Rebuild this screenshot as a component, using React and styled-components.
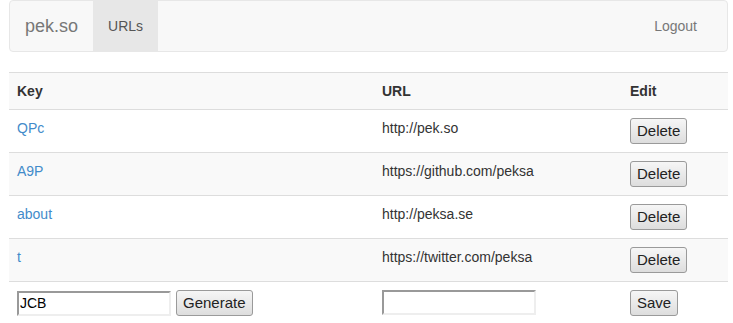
import styled, { createGlobalStyle } from "styled-components";

const GlobalStyle = createGlobalStyle`
  html, body {
    margin: 0;
    padding: 0;
    background: #fff;
  }
  body {
    font-family: "Liberation Sans", Arial, sans-serif;
    font-size: 14px;
    line-height: 20px;
    color: #333;
  }
  * {
    box-sizing: border-box;
  }
`;

const Page = styled.div`
  padding: 0 5px 0 9px;
`;

const Navbar = styled.nav`
  display: flex;
  align-items: stretch;
  min-height: 50px;
  background: #f8f8f8;
  border: 1px solid #e7e7e7;
  border-radius: 4px;
  margin-bottom: 20px;
`;

const Brand = styled.a`
  padding: 15px;
  font-size: 18px;
  line-height: 20px;
  color: #777;
  text-decoration: none;
`;

const NavLink = styled.a`
  padding: 15px;
  line-height: 20px;
  color: ${(p) => (p.$active ? "#555" : "#777")};
  background: ${(p) => (p.$active ? "#e7e7e7" : "transparent")};
  text-decoration: none;
  margin-left: ${(p) => (p.$right ? "auto" : "0")};
  margin-right: ${(p) => (p.$right ? "15px" : "0")};
`;

const Table = styled.table`
  width: 100%;
  border-collapse: collapse;
  border-spacing: 0;
  table-layout: fixed;
`;

const Row = styled.tr`
  background: ${(p) => (p.$striped ? "#f9f9f9" : "#fff")};
`;

const Th = styled.th`
  width: ${(p) => p.$w || "auto"};
  padding: 8px;
  text-align: left;
  font-weight: bold;
  vertical-align: bottom;
  border-top: 1px solid #ddd;
`;

const Td = styled.td`
  padding: 8px;
  vertical-align: top;
  border-top: 1px solid #ddd;
`;

const KeyLink = styled.a`
  color: #428bca;
  text-decoration: none;
`;

const Button = styled.button`
  font-family: inherit;
  font-size: 15px;
  line-height: 20px;
  height: 26px;
  padding: 2px 6px;
  margin: 0;
  color: #222;
  background: linear-gradient(#f6f6f6, #dddddd);
  border: 1px solid #9a9a9a;
  border-radius: 3px;
`;

const InputGroup = styled.div`
  display: flex;
  align-items: center;
  gap: 5px;
`;

const TextInput = styled.input`
  width: 154px;
  height: 25px;
  font-family: inherit;
  font-size: 14px;
  color: #000;
  padding: 1px 1px;
  margin: 0;
  background: #fff;
  border: 2px solid;
  border-color: #999 #eee #eee #999;
  outline: none;
`;

const urls = [
  { key: "QPc", url: "http://pek.so" },
  { key: "A9P", url: "https://github.com/peksa" },
  { key: "about", url: "http://peksa.se" },
  { key: "t", url: "https://twitter.com/peksa" },
];

export default function App() {
  return (
    <>
      <GlobalStyle />
      <Page>
        <Navbar>
          <Brand href="#">pek.so</Brand>
          <NavLink href="#" $active>
            URLs
          </NavLink>
          <NavLink href="#" $right>
            Logout
          </NavLink>
        </Navbar>
        <Table>
          <tbody>
            <Row $striped>
              <Th $w="365px">Key</Th>
              <Th $w="248px">URL</Th>
              <Th>Edit</Th>
            </Row>
            {urls.map((u, i) => (
              <Row key={u.key} $striped={i % 2 === 1}>
                <Td>
                  <KeyLink href="#">{u.key}</KeyLink>
                </Td>
                <Td>{u.url}</Td>
                <Td>
                  <Button>Delete</Button>
                </Td>
              </Row>
            ))}
            <Row>
              <Td>
                <InputGroup>
                  <TextInput defaultValue="JCB" />
                  <Button>Generate</Button>
                </InputGroup>
              </Td>
              <Td>
                <TextInput defaultValue="" />
              </Td>
              <Td>
                <Button>Save</Button>
              </Td>
            </Row>
          </tbody>
        </Table>
      </Page>
    </>
  );
}
